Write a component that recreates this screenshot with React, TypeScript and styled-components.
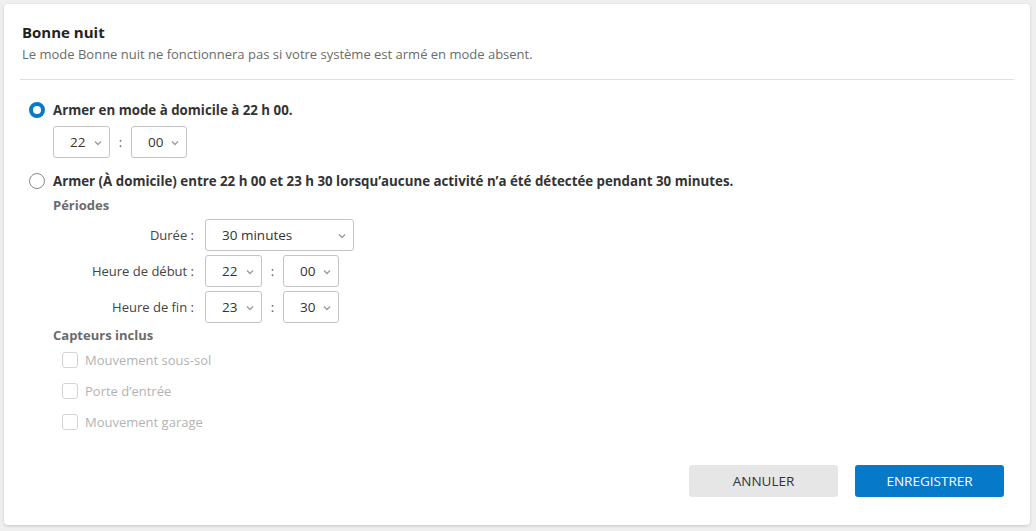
import React from "react";
import styled, { createGlobalStyle } from "styled-components";

const GlobalStyle = createGlobalStyle`
  html, body { margin: 0; padding: 0; background: #efefef; }
  body { font-family: "Open Sans", "Noto Sans", sans-serif; color: #333; }
  * { box-sizing: border-box; }
`;

const Card = styled.div`
  margin: 4px;
  width: 1026px;
  height: 521px;
  background: #fff;
  border-radius: 4px;
  box-shadow: 0 1px 3px rgba(0, 0, 0, 0.18);
  padding: 18px 16px 0 16px;
  display: flex;
  flex-direction: column;
`;

const Header = styled.div`
  padding-left: 2px;
  display: flex;
  flex-direction: column;
  gap: 3px;
`;

const Title = styled.h1`
  margin: 0;
  font-size: 15px;
  line-height: 20px;
  font-weight: 700;
  color: #222;
`;

const Subtitle = styled.p`
  margin: 0;
  font-size: 13px;
  line-height: 18px;
  color: #6b6b6b;
`;

const Divider = styled.hr`
  border: none;
  border-top: 1px solid #e0e0e0;
  margin: 16px 0 0 0;
`;

const Body = styled.div`
  padding-left: 9px;
  display: flex;
  flex-direction: column;
`;

const RadioRow = styled.label<{ $top: number }>`
  display: flex;
  align-items: center;
  gap: 8px;
  height: 20px;
  margin-top: ${(p) => p.$top}px;
  font-size: 13.3px;
  font-weight: 700;
  color: #333;
`;

const RadioDot = styled.span<{ $checked?: boolean }>`
  width: 16px;
  height: 16px;
  border-radius: 50%;
  flex: none;
  background: #fff;
  border: ${(p) => (p.$checked ? "4.5px solid #0a78c8" : "1px solid #8a8a8a")};
`;

const Indent = styled.div<{ $top: number }>`
  margin-left: 24px;
  margin-top: ${(p) => p.$top}px;
  display: flex;
  flex-direction: column;
`;

const TimeRow = styled.div`
  display: flex;
  align-items: center;
  height: 32px;
`;

const Colon = styled.span`
  width: 21px;
  text-align: center;
  font-size: 13px;
  color: #555;
`;

const SelectBox = styled.div<{ $w: number }>`
  position: relative;
  width: ${(p) => p.$w}px;
  height: 32px;
  border: 1px solid #c4c4c4;
  border-radius: 3px;
  display: flex;
  align-items: center;
  padding-left: 16px;
  font-size: 13.5px;
  color: #333;
  background: #fff;
`;

const Chevron = styled.svg`
  position: absolute;
  right: 7px;
  top: 13px;
`;

const SectionTitle = styled.div<{ $top: number }>`
  font-size: 13px;
  font-weight: 700;
  color: #6b6b6b;
  line-height: 18px;
  margin-top: ${(p) => p.$top}px;
`;

const FormGrid = styled.div`
  display: grid;
  grid-template-columns: 141px auto;
  column-gap: 11px;
  row-gap: 4px;
  margin-top: 5px;
  justify-content: start;
  align-items: center;
`;

const FieldLabel = styled.span`
  text-align: right;
  font-size: 13px;
  color: #444;
`;

const CheckList = styled.div`
  display: flex;
  flex-direction: column;
  margin-left: 9px;
  margin-top: 0;
`;

const CheckRow = styled.label`
  display: flex;
  align-items: center;
  gap: 7px;
  height: 31px;
  font-size: 13px;
  color: #b3b3b3;
`;

const CheckBox = styled.span`
  width: 16px;
  height: 16px;
  border: 1px solid #d4d4d4;
  border-radius: 3px;
  flex: none;
`;

const Footer = styled.div`
  margin-top: auto;
  margin-bottom: 28px;
  padding-right: 10px;
  display: flex;
  justify-content: flex-end;
  gap: 17px;
`;

const Button = styled.button<{ $primary?: boolean }>`
  width: 149px;
  height: 32px;
  border: none;
  border-radius: 3px;
  font-family: inherit;
  font-size: 13.5px;
  background: ${(p) => (p.$primary ? "#0779c9" : "#e6e6e6")};
  color: ${(p) => (p.$primary ? "#fff" : "#333")};
`;

const ChevronIcon = () => (
  <Chevron width="8" height="6" viewBox="0 0 8 6">
    <path d="M1 1.5l3 3 3-3" fill="none" stroke="#9a9a9a" strokeWidth="1.3" />
  </Chevron>
);

const Select = ({ w, value }: { w: number; value: string }) => (
  <SelectBox $w={w}>
    {value}
    <ChevronIcon />
  </SelectBox>
);

const Time = ({ h, m }: { h: string; m: string }) => (
  <TimeRow>
    <Select w={57} value={h} />
    <Colon>:</Colon>
    <Select w={56} value={m} />
  </TimeRow>
);

export default function App() {
  return (
    <>
      <GlobalStyle />
      <Card>
        <Header>
          <Title>Bonne nuit</Title>
          <Subtitle>
            Le mode Bonne nuit ne fonctionnera pas si votre système est armé en mode absent.
          </Subtitle>
        </Header>
        <Divider />
        <Body>
          <RadioRow $top={20}>
            <RadioDot $checked />
            Armer en mode à domicile à 22 h 00.
          </RadioRow>
          <Indent $top={6}>
            <Time h="22" m="00" />
          </Indent>
          <RadioRow $top={13}>
            <RadioDot />
            Armer (À domicile) entre 22 h 00 et 23 h 30 lorsqu’aucune activité n’a été détectée pendant 30 minutes.
          </RadioRow>
          <Indent $top={5}>
            <SectionTitle $top={0}>Périodes</SectionTitle>
            <FormGrid>
              <FieldLabel>Durée :</FieldLabel>
              <TimeRow>
                <Select w={149} value="30 minutes" />
              </TimeRow>
              <FieldLabel>Heure de début :</FieldLabel>
              <Time h="22" m="00" />
              <FieldLabel>Heure de fin :</FieldLabel>
              <Time h="23" m="30" />
            </FormGrid>
            <SectionTitle $top={3}>Capteurs inclus</SectionTitle>
            <CheckList>
              <CheckRow>
                <CheckBox />
                Mouvement sous-sol
              </CheckRow>
              <CheckRow>
                <CheckBox />
                Porte d’entrée
              </CheckRow>
              <CheckRow>
                <CheckBox />
                Mouvement garage
              </CheckRow>
            </CheckList>
          </Indent>
        </Body>
        <Footer>
          <Button>ANNULER</Button>
          <Button $primary>ENREGISTRER</Button>
        </Footer>
      </Card>
    </>
  );
}
